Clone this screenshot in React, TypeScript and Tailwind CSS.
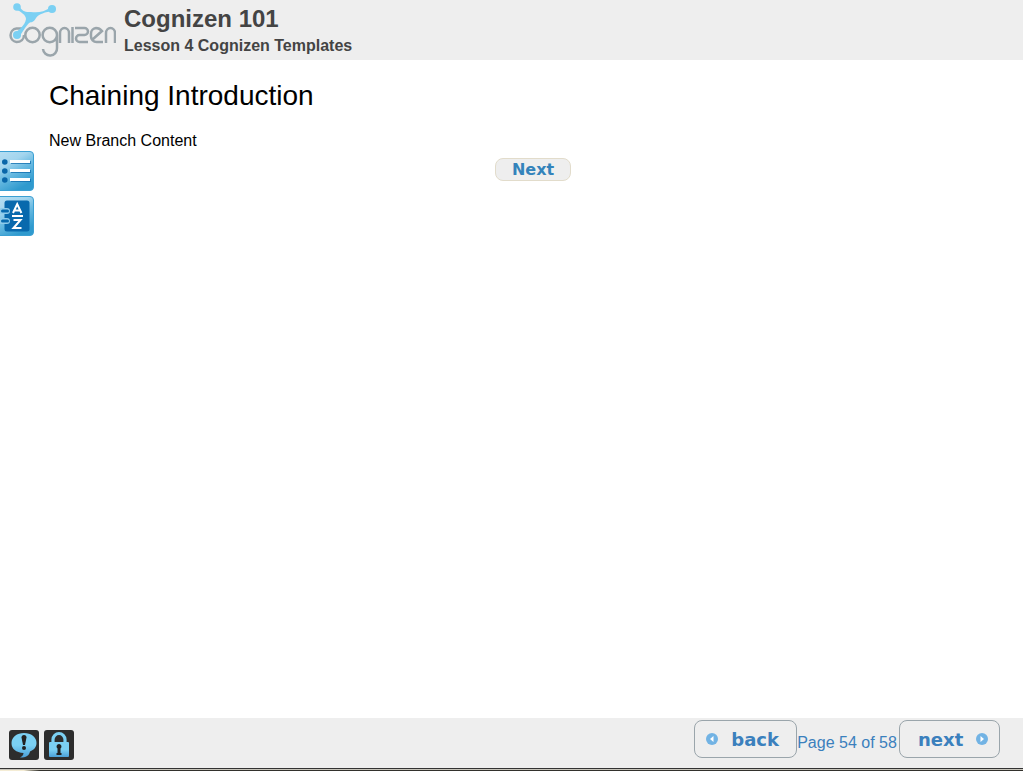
import React from "react";

function Logo() {
  return (
    <svg viewBox="0 0 116 60" className="h-[60px] w-[116px] shrink-0" role="img" aria-label="Cognizen">
      <g fill="none" stroke="#9aa5ab" strokeWidth="2.5">
        <path d="M24 28.500H16.500A6.800 6.800 0 0 0 16.500 42C21 42 24 39 24 35" />
        <circle cx="32.500" cy="35" r="7.200" />
        <path d="M57 35a7.200 7.200 0 1 0-7.200 7.200a7.200 7.200 0 0 0 7.200-7.200v13a7 7 0 0 1-14 1" />
        <path d="M60 43v-10a4.500 5 0 0 1 9 0v10" />
        <path d="M72.500 27v16" />
        <path d="M75 28h9.500a3.500 3.500 0 0 1 0 7h-5a3.500 3.500 0 0 0 0 7H88" />
        <path d="M92.500 39.500L102 31C100 28.500 98 28 96 28a5.500 5.500 0 0 0-5 5.500v3a5.500 5.500 0 0 0 5.500 5.500h6.500" />
        <path d="M106 43v-10a4.500 5 0 0 1 9 0v10" />
      </g>
      <g fill="#7bd0f3">
        <circle cx="17" cy="7" r="3.800" />
        <circle cx="52" cy="9" r="4" />
        <circle cx="17" cy="35" r="4" />
        <path d="M19 6C22 11 25 12.500 31 12C38 13 44 12 51 7L53 11C45 12 39 14 36 18C34 22 32 22 30 22.500C27 24 24 30 19 37L15 33C20 29 25 25 26 19C26 15 21 12 16 9Z" />
      </g>
    </svg>
  );
}

function ListIcon() {
  return (
    <svg viewBox="0 0 34 40" className="h-10 w-[34px]" aria-hidden="true">
      <defs>
        <linearGradient id="tile" x1="0" y1="0" x2="0.500" y2="1">
          <stop offset="0" stopColor="#b5def2" />
          <stop offset="0.350" stopColor="#a3d5ee" />
          <stop offset="0.600" stopColor="#6bbbe2" />
          <stop offset="1" stopColor="#2f9ace" />
        </linearGradient>
      </defs>
      <path d="M-1 .5h31a3.500 3.500 0 0 1 3.500 3.500v32a3.500 3.500 0 0 1-3.500 3.500H-1z" fill="url(#tile)" stroke="#3ba0d3" />
      <g fill="#0866a9">
        <circle cx="4.800" cy="11" r="2.800" />
        <circle cx="4.800" cy="20" r="2.800" />
        <circle cx="4.800" cy="29" r="2.800" />
        <path d="M11 10h20v3H11zM11 19h20v3H11zM11 28h20v3H11z" opacity="0.700" />
      </g>
      <path d="M10 9h20v3H10zM10 18h20v3H10zM10 27h20v3H10z" fill="#fff" />
    </svg>
  );
}

function GlossaryIcon() {
  return (
    <svg viewBox="0 0 34 40" className="h-10 w-[34px]" aria-hidden="true">
      <path d="M-1 .5h31a3.500 3.500 0 0 1 3.500 3.500v32a3.500 3.500 0 0 1-3.500 3.500H-1z" fill="url(#tile)" stroke="#3ba0d3" />
      <rect x="4.500" y="4.500" width="25" height="31" rx="2.500" fill="#0869ad" />
      <g fill="none" strokeLinecap="round">
        <path d="M2 15h5M2 25h5" stroke="#8ecbea" strokeWidth="6" />
        <path d="M2.500 15h5M2.500 25h5" stroke="#0869ad" strokeWidth="3" />
      </g>
      <g fill="none" stroke="#fff" strokeWidth="2">
        <path d="M13 17l4.200-9l4.200 9M14.500 14.500h5.500" />
        <path d="M13.500 24h7l-7 8h8" />
        <path d="M12 20h11" />
      </g>
    </svg>
  );
}

function CommentIcon() {
  return (
    <svg viewBox="0 0 30 30" className="size-[30px]" aria-hidden="true">
      <defs>
        <linearGradient id="blue" x1="0" y1="0" x2="0" y2="1">
          <stop offset="0.500" stopColor="#7bd0f3" />
          <stop offset="1" stopColor="#4a9fd8" />
        </linearGradient>
      </defs>
      <rect width="30" height="30" rx="3" fill="#2d2d2d" />
      <path d="M15 3C8 3 2.500 7 2.500 13S7 22.500 14.500 23c0 2-1 3-3.500 4.500c6.500 0 9-2 10-6c4-1.500 6.500-4.500 6.500-8.500C27.500 7 22 3 15 3z" fill="url(#blue)" />
      <path d="M12.500 7.500a2.500 2.500 0 0 1 5 0l-1.500 7.500h-2z" fill="#222" />
      <circle cx="15" cy="18" r="2" fill="#222" />
    </svg>
  );
}

function LockIcon() {
  return (
    <svg viewBox="0 0 30 30" className="size-[30px]" aria-hidden="true">
      <rect width="30" height="30" rx="3" fill="#2d2d2d" />
      <path d="M9 13V9.500a6 6 0 0 1 12 0V13" fill="none" stroke="#7bd0f3" strokeWidth="3.200" />
      <rect x="5" y="12" width="20" height="15" rx="1" fill="url(#blue)" />
      <path d="M15 14a2.500 2.500 0 0 1 1.500 4.500V23h1v2h-5v-2h1v-4.500A2.500 2.500 0 0 1 15 14z" fill="#222" />
    </svg>
  );
}

function Arrow({ left = false }: { left?: boolean }) {
  return (
    <svg viewBox="0 0 12 12" className="size-3" aria-hidden="true">
      <circle cx="6" cy="6" r="6" fill="#72b3e4" />
      <path d={left ? "M7.500 3v6L4 6z" : "M4.500 3v6L8 6z"} fill="#fff" />
    </svg>
  );
}

export default function App() {
  return (
    <div className="flex min-h-screen flex-col bg-white font-['Liberation_Sans',Arial,sans-serif] text-black">
      <header className="flex h-[60px] bg-[#eeeeee] text-[#444444]">
        <Logo />
        <div className="pt-1 pl-2 font-bold">
          <h1 className="text-2xl leading-[30px]">Cognizen 101</h1>
          <p className="text-base leading-6">Lesson 4 Cognizen Templates</p>
        </div>
      </header>

      <div className="flex flex-1">
        <nav className="flex w-[49px] shrink-0 flex-col items-start gap-[5px] pt-[91px]">
          <button type="button" aria-label="Table of contents"><ListIcon /></button>
          <button type="button" aria-label="Glossary"><GlossaryIcon /></button>
        </nav>
        <main className="flex-1 pt-5">
          <h2 className="text-[28px] leading-8">Chaining Introduction</h2>
          <p className="mt-4 text-base leading-[26px]">New Branch Content</p>
          <div className="mt-1 flex justify-center pr-1.5">
            <button type="button" className="h-[23px] w-[76px] rounded-lg border border-[#e2dccb] bg-[#eeeeee] font-['DejaVu_Sans',Verdana,sans-serif] text-base leading-5 font-bold text-[#3383bb]">
              Next
            </button>
          </div>
        </main>
      </div>

      <footer>
        <div className="flex h-[50px] items-start justify-between bg-[#eeeeee] pt-0.5 pr-[23px] pl-[9px] text-[#3b80bd]">
          <div className="flex gap-[5px] pt-2.5">
            <button type="button" aria-label="Comments"><CommentIcon /></button>
            <button type="button" aria-label="Lock"><LockIcon /></button>
          </div>
          <div className="flex">
            <button type="button" className="flex h-[38px] w-[103px] items-center justify-between rounded-lg border border-[#9aa5ab] pr-[17px] pl-[11px] font-['DejaVu_Sans',Verdana,sans-serif] text-lg font-bold">
              <Arrow left />
              <span className="pt-0.5">back</span>
            </button>
            <span className="w-[102px] pt-3 pr-0.5 text-center text-base leading-[22px] whitespace-nowrap">Page 54 of 58</span>
            <button type="button" className="flex h-[38px] w-[101px] items-center justify-between rounded-lg border border-[#9aa5ab] pr-[11px] pl-[18px] font-['DejaVu_Sans',Verdana,sans-serif] text-lg font-bold">
              <span className="pt-0.5">next</span>
              <Arrow />
            </button>
          </div>
        </div>
        <div className="h-px bg-[#333333]" />
        <div className="h-px bg-[#c8c5bb]" />
        <div className="h-px bg-linear-to-r from-[#f5edd5] from-[24px] to-[#33322d] to-[40px]" />
      </footer>
    </div>
  );
}
